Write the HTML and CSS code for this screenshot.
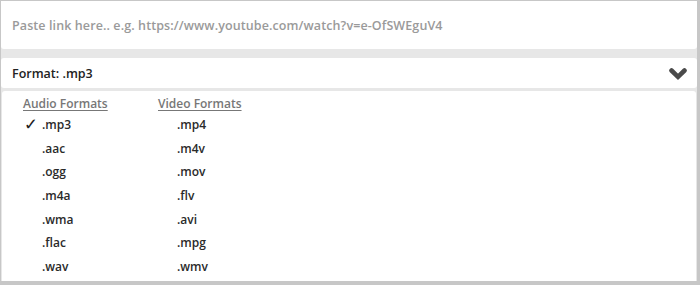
FILE: index.html
```html
<!DOCTYPE html>
<html>
<head>
<meta charset="utf-8">
<link rel="stylesheet" href="styles.css">
</head>
<body>
<div class="frame">
  <div class="link-box">
    <span class="placeholder">Paste link here.. e.g. https://www.youtube.com/watch?v=e-OfSWEguV4</span>
  </div>
  <div class="format-bar">
    <span class="format-label">Format: .mp3</span>
    <svg class="chevron" width="18" height="12" viewBox="0 0 18 12" aria-hidden="true">
      <path d="M2.5 2.5 L9 8.8 L15.5 2.5" fill="none" stroke="#4a4a4a" stroke-width="4.6" stroke-linecap="round" stroke-linejoin="miter"/>
    </svg>
  </div>
  <div class="panel">
    <div class="col audio">
      <div class="col-head">Audio Formats</div>
      <div class="item selected"><span class="check">&#10003;</span>.mp3</div>
      <div class="item">.aac</div>
      <div class="item">.ogg</div>
      <div class="item">.m4a</div>
      <div class="item">.wma</div>
      <div class="item">.flac</div>
      <div class="item">.wav</div>
    </div>
    <div class="col video">
      <div class="col-head">Video Formats</div>
      <div class="item">.mp4</div>
      <div class="item">.m4v</div>
      <div class="item">.mov</div>
      <div class="item">.flv</div>
      <div class="item">.avi</div>
      <div class="item">.mpg</div>
      <div class="item">.wmv</div>
    </div>
  </div>
</div>
</body>
</html>
```
FILE: styles.css
```css
html, body {
  margin: 0;
  padding: 0;
}
body {
  width: 700px;
  height: 285px;
  font-family: "Open Sans", "Liberation Sans", sans-serif;
}
.frame {
  box-sizing: border-box;
  width: 700px;
  height: 285px;
  border-style: solid;
  border-color: #c7c7c7;
  border-width: 1px 3px 4px 1px;
  background: #e7e7e7;
  display: flex;
  flex-direction: column;
}
.link-box {
  height: 48px;
  background: #fff;
  border-radius: 0 0 3px 3px;
  display: flex;
  align-items: center;
  padding-left: 11px;
}
.placeholder {
  color: #9a9a9a;
  font-size: 12.5px;
  font-weight: 600;
  letter-spacing: 0.1px;
}
.format-bar {
  margin-top: 9px;
  height: 30px;
  background: #fff;
  border-radius: 3px;
  display: flex;
  align-items: center;
  justify-content: space-between;
  padding: 0 10px 0 11px;
}
.format-label {
  color: #222;
  font-size: 12.5px;
  font-weight: 600;
}
.chevron {
  display: block;
  margin-top: 1px;
}
.panel {
  margin: 3px 1px 0 1px;
  flex: 1;
  background: #fff;
  border-radius: 3px 3px 0 0;
  display: flex;
  padding: 4px 0 0 21px;
}
.col {
  display: flex;
  flex-direction: column;
}
.audio {
  width: 135px;
}
.col-head {
  color: #777;
  font-size: 12px;
  font-weight: 600;
  text-decoration: underline;
  text-underline-offset: 2px;
  height: 17px;
  line-height: 17px;
  margin-bottom: 1px;
}
.item {
  color: #2a2a2a;
  font-size: 12px;
  font-weight: 600;
  height: 23.7px;
  line-height: 23.7px;
  padding-left: 19px;
  position: relative;
}
.check {
  position: absolute;
  left: 1px;
  top: 0;
  font-size: 16.5px;
  font-weight: 700;
  color: #222;
  font-family: "DejaVu Sans", sans-serif;
}
```
